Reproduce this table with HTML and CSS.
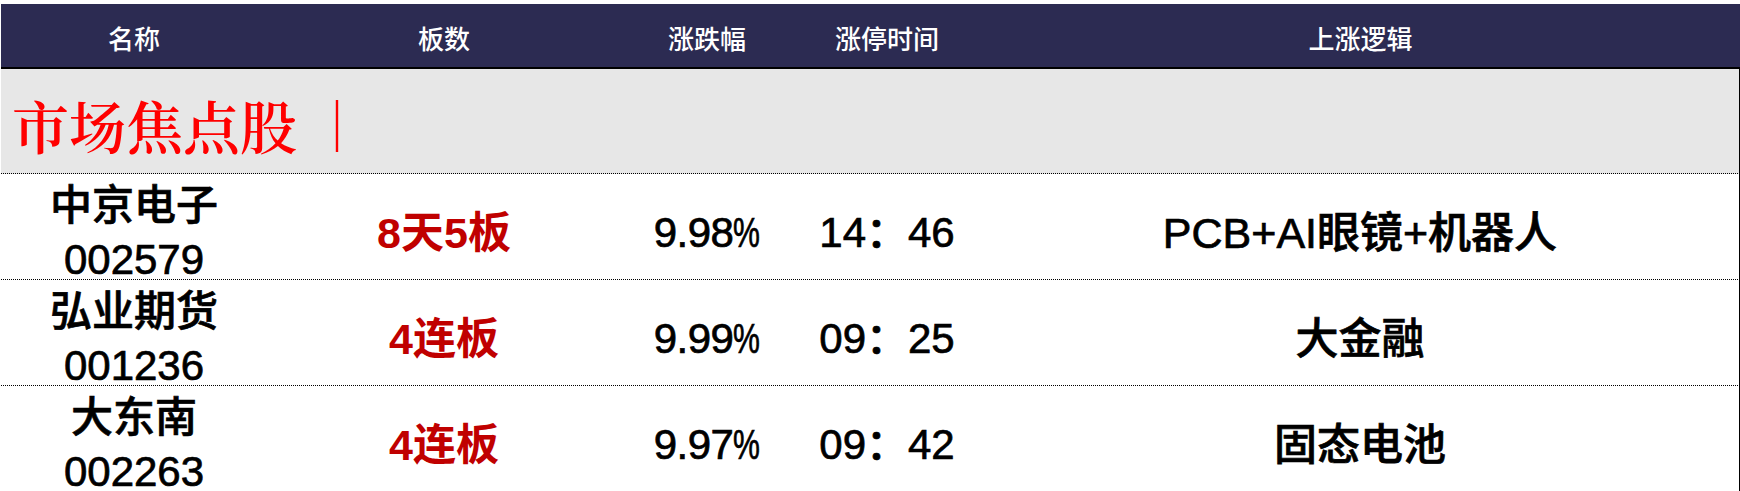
FILE: index.html
```html
<!DOCTYPE html>
<html lang="zh-CN">
<head>
<meta charset="utf-8">
<title>市场焦点股</title>
<link rel="stylesheet" href="styles.css">
</head>
<body>
<div class="sheet">
  <div class="head cols">
    <div class="hc">名称</div>
    <div class="hc">板数</div>
    <div class="hc">涨跌幅</div>
    <div class="hc">涨停时间</div>
    <div class="hc">上涨逻辑</div>
  </div>
  <div class="band">
    <span class="title">市场焦点股</span><span class="bar">｜</span>
  </div>
  <div class="row cols">
    <div class="cell name"><span>中京电子</span><span>002579</span></div>
    <div class="cell board">8天5板</div>
    <div class="cell pct">9.98<span class="pc">%</span></div>
    <div class="cell time">14：46</div>
    <div class="cell logic">PCB+AI眼镜+机器人</div>
  </div>
  <div class="row cols">
    <div class="cell name"><span>弘业期货</span><span>001236</span></div>
    <div class="cell board">4连板</div>
    <div class="cell pct">9.99<span class="pc">%</span></div>
    <div class="cell time">09：25</div>
    <div class="cell logic">大金融</div>
  </div>
  <div class="row cols">
    <div class="cell name"><span>大东南</span><span>002263</span></div>
    <div class="cell board">4连板</div>
    <div class="cell pct">9.97<span class="pc">%</span></div>
    <div class="cell time">09：42</div>
    <div class="cell logic">固态电池</div>
  </div>
</div>
</body>
</html>
```

FILE: styles.css
```css
html, body {
  margin: 0;
  padding: 0;
  background: #ffffff;
}

body {
  font-family: "Liberation Sans", "Noto Sans CJK SC", sans-serif;
  overflow: hidden;
}

.sheet {
  margin: 4px 0 0 1px;
  width: 1739px;
}

.cols {
  display: grid;
  grid-template-columns: 266px 354px 172px 188px 1fr;
}

.head {
  height: 63px;
  background: #2c2b52;
  border-bottom: 2px solid #000000;
  align-items: center;
}

.hc {
  color: #ffffff;
  font-family: "Noto Sans CJK SC", sans-serif;
  font-weight: 500;
  font-size: 26px;
  text-align: center;
  padding-top: 3px;
}

.band {
  background: #e7e7e7;
  border-right: 1px solid #000000;
  border-bottom: 1px dotted #000000;
  display: flex;
  align-items: center;
  padding-left: 11px;
  padding-top: 6px;
  box-sizing: border-box;
  height: 105px;
}

.title {
  color: #ff0000;
  font-family: "Noto Serif CJK SC", "Source Han Serif SC", "AR PL UMing CN", serif;
  font-weight: 600;
  font-size: 57px;
  line-height: 1;
}

.bar {
  color: #ff0000;
  font-family: "Noto Sans CJK SC", sans-serif;
  font-weight: 700;
  font-size: 52px;
  line-height: 1;
  margin-left: 14px;
}

.row {
  height: 105px;
  border-right: 1px solid #000000;
  border-bottom: 1px dotted #000000;
  align-items: center;
}

.cell {
  text-align: center;
  font-size: 42px;
  font-weight: 500;
  color: #000000;
  line-height: 54px;
  padding-top: 5px;
  -webkit-text-stroke: 0.7px #000000;
}

.name {
  display: flex;
  flex-direction: column;
  align-items: center;
}

.board {
  color: #c00000;
  font-weight: 700;
  font-size: 43px;
  -webkit-text-stroke: 0;
}

.pct {
  letter-spacing: -0.5px;
}

.pc {
  display: inline-block;
  transform: scaleX(0.72);
  transform-origin: left center;
  margin-right: -10px;
}

.logic {
  font-size: 43px;
}
```
